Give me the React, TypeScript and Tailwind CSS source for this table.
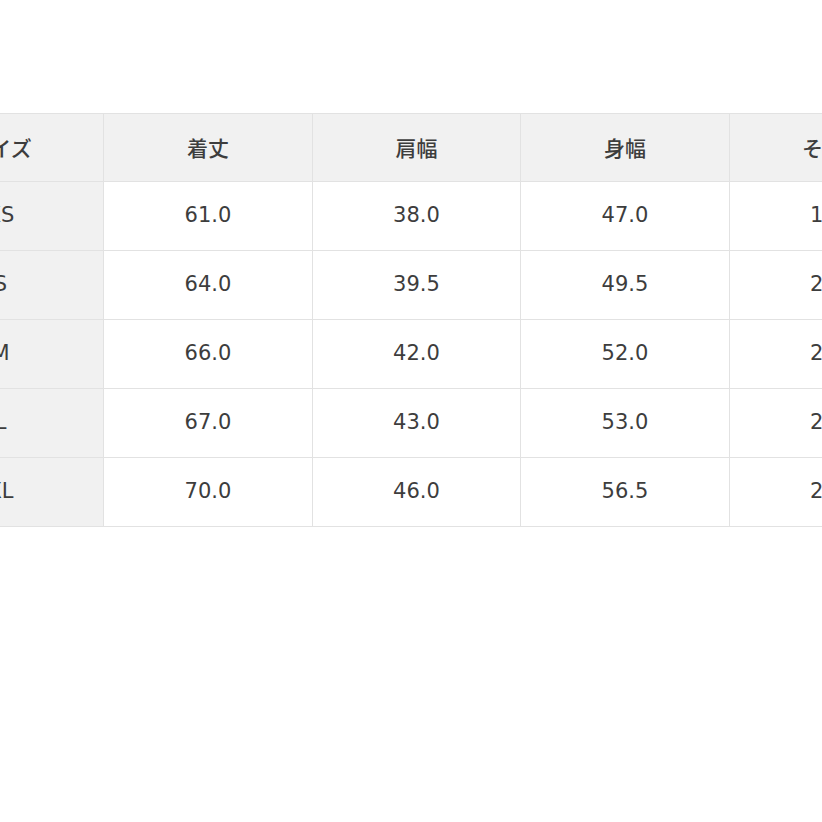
import React from 'react';

const headers = ['サイズ', '着丈', '肩幅', '身幅', 'そで丈'];

const rows = [
    ['XS', '61.0', '38.0', '47.0', '19.0'],
    ['S', '64.0', '39.5', '49.5', '20.0'],
    ['M', '66.0', '42.0', '52.0', '21.0'],
    ['L', '67.0', '43.0', '53.0', '22.0'],
    ['XL', '70.0', '46.0', '56.5', '23.0'],
];

const widths = ['w-[206px]', 'w-[209px]', 'w-[208px]', 'w-[209px]', 'w-[208px]'];

export default function App() {
    return (
        <div className="w-[822px] h-[822px] bg-white overflow-hidden pt-[113px]">
            <table
                className="-ml-[103px] w-[1040px] min-w-[1040px] border-collapse table-fixed text-[#3d3d3d] text-[21px]"
                style={{ fontFamily: '"DejaVu Sans", "Noto Sans CJK JP", sans-serif' }}
            >
                <thead>
                    <tr className="h-[68px] bg-[#f1f1f1]">
                        {headers.map((h, i) => (
                            <th
                                key={h}
                                className={`${widths[i]} border border-[#e2e2e2] font-medium text-center`}
                                style={{ fontFamily: '"Noto Sans CJK JP", sans-serif' }}
                            >
                                {h}
                            </th>
                        ))}
                    </tr>
                </thead>
                <tbody>
                    {rows.map((r) => (
                        <tr key={r[0]} className="h-[69px]">
                            {r.map((c, i) => (
                                <td
                                    key={i}
                                    className={`border border-[#e2e2e2] text-center ${i === 0 ? 'bg-[#f1f1f1]' : 'bg-white'}`}
                                >
                                    {c}
                                </td>
                            ))}
                        </tr>
                    ))}
                </tbody>
            </table>
        </div>
    );
}
